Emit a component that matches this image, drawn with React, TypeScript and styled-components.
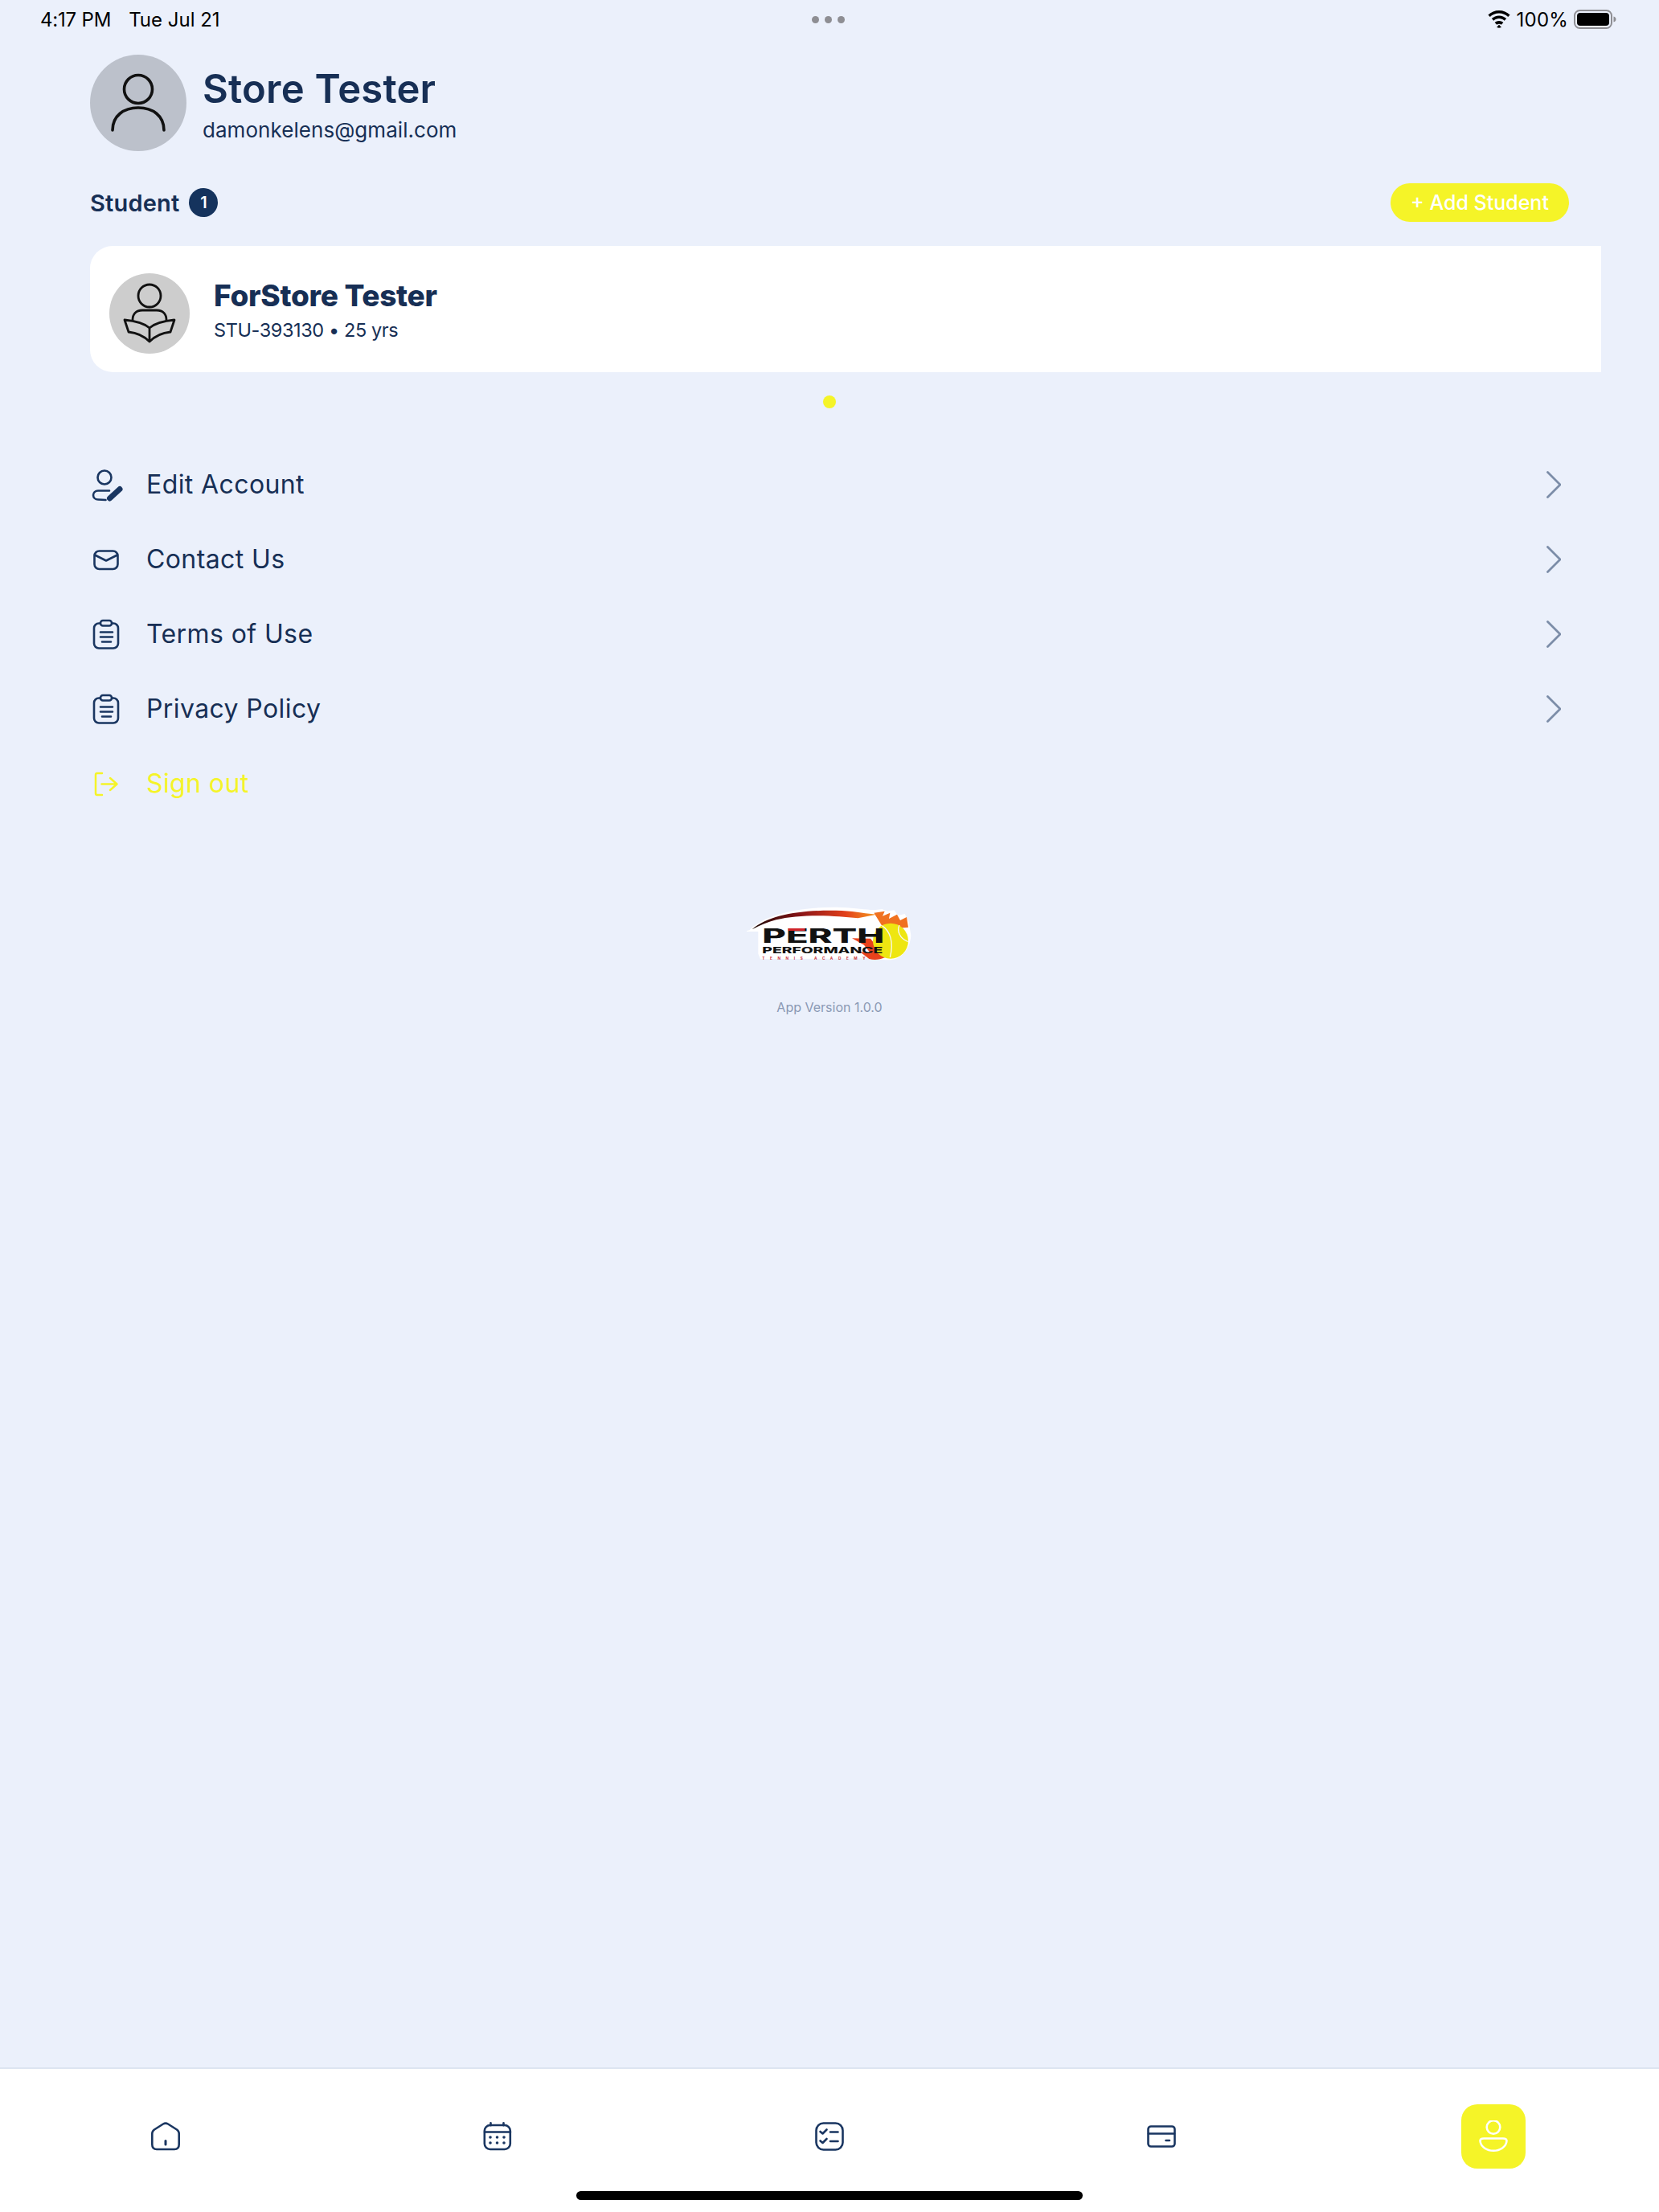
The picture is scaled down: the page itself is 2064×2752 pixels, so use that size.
import React from "react";
import styled, { createGlobalStyle } from "styled-components";

const NAVY = "#172f55";
const ICON = "#1a3661";
const YELLOW = "#f5f428";
const BG = "#ebf0fb";
const FONT = `"Inter", "Noto Sans", sans-serif`;

const Global = createGlobalStyle`
  html, body { margin: 0; padding: 0; background: ${BG}; }
  * { box-sizing: border-box; }
`;

const Page = styled.div`
  width: 2064px;
  height: 2752px;
  display: flex;
  flex-direction: column;
  background: ${BG};
  font-family: ${FONT};
  color: ${NAVY};
  overflow: hidden;
  position: relative;
`;

const StatusBar = styled.div`
  height: 48px;
  flex: none;
  display: grid;
  grid-template-columns: 1fr auto 1fr;
  align-items: center;
  padding: 0 53px 0 50px;
  color: #000;
  font-size: 24px;
`;
const StatusLeft = styled.div`
  display: flex;
  gap: 22px;
`;
const ClockTime = styled.span`
  letter-spacing: -0.2px;
`;
const Dots = styled.div`
  display: flex;
  gap: 7px;
`;
const Dot3 = styled.span`
  width: 9px;
  height: 9px;
  border-radius: 50%;
  background: #8e8e93;
`;
const StatusRight = styled.div`
  display: flex;
  align-items: center;
  justify-content: flex-end;
  gap: 7px;
  letter-spacing: 0.2px;
`;

const Main = styled.main`
  flex: 1;
  padding: 20px 112px 0;
  display: flex;
  flex-direction: column;
`;

const Profile = styled.section`
  display: flex;
  align-items: center;
  gap: 20px;
  height: 120px;
`;
const AvatarCircle = styled.div<{ $size: number; $bg: string }>`
  width: ${(p) => p.$size}px;
  height: ${(p) => p.$size}px;
  border-radius: 50%;
  background: ${(p) => p.$bg};
  flex: none;
  display: flex;
`;
const ProfileText = styled.div`
  display: flex;
  flex-direction: column;
  gap: 8px;
  padding-top: 5px;
`;
const Title = styled.h1`
  margin: 0;
  font-size: 49px;
  line-height: 54px;
  font-weight: 600;
  color: ${NAVY};
  letter-spacing: 0.2px;
`;
const Email = styled.div`
  font-size: 26px;
  line-height: 32px;
  font-weight: 400;
  letter-spacing: 0.05px;
`;

const SectionRow = styled.section`
  margin-top: 40px;
  height: 48px;
  display: flex;
  align-items: center;
  justify-content: space-between;
`;
const SectionTitle = styled.div`
  display: flex;
  align-items: center;
  gap: 12px;
  font-size: 29px;
  font-weight: 600;
  letter-spacing: 0.2px;
`;
const Badge = styled.span`
  width: 36px;
  height: 36px;
  border-radius: 50%;
  background: #15335d;
  color: #fff;
  font-size: 20px;
  font-weight: 600;
  display: flex;
  align-items: center;
  justify-content: center;
`;
const AddButton = styled.button`
  width: 222px;
  height: 48px;
  border: 0;
  border-radius: 24px;
  background: ${YELLOW};
  color: #fff;
  font-family: ${FONT};
  font-size: 25px;
  font-weight: 500;
  padding: 0;
`;

const Carousel = styled.div`
  margin: 30px -40px 0 0;
  overflow: hidden;
`;
const StudentCard = styled.article`
  width: calc(100% + 40px);
  height: 157px;
  border-radius: 28px;
  background: #fff;
  display: flex;
  align-items: center;
  gap: 30px;
  padding: 11px 0 0 24px;
`;
const StudentText = styled.div`
  display: flex;
  flex-direction: column;
  gap: 6px;
  margin-bottom: 8px;
`;
const StudentName = styled.div`
  font-size: 37px;
  line-height: 44px;
  font-weight: 800;
  letter-spacing: -0.3px;
`;
const StudentMeta = styled.div`
  font-size: 23.5px;
  line-height: 30px;
  letter-spacing: -0.4px;
`;
const PageDot = styled.div`
  width: 16px;
  height: 16px;
  border-radius: 50%;
  background: ${YELLOW};
  margin: 29px auto 48px;
`;

const Menu = styled.nav`
  display: flex;
  flex-direction: column;
`;
const Row = styled.div<{ $accent?: boolean }>`
  height: 93px;
  display: flex;
  align-items: center;
  gap: 27px;
  padding-right: 10px;
  font-size: 32px;
  font-weight: 400;
  color: ${(p) => (p.$accent ? YELLOW : NAVY)};
`;
const RowLabel = styled.span`
  flex: 1;
  margin-left: -1px;
  letter-spacing: 0.4px;
`;

const Footer = styled.div`
  margin-top: 106px;
  display: flex;
  flex-direction: column;
  align-items: center;
  gap: 42px;
`;
const Version = styled.div`
  font-size: 16px;
  line-height: 24px;
  color: #8a99b4;
`;

const TabBar = styled.footer`
  height: 180px;
  flex: none;
  background: #fff;
  border-top: 2px solid #dde4f0;
  display: grid;
  grid-template-columns: repeat(5, 1fr);
  padding-bottom: 10px;
`;
const Tab = styled.div`
  display: flex;
  align-items: center;
  justify-content: center;
`;
const ActiveTab = styled.div`
  width: 80px;
  height: 80px;
  border-radius: 20px;
  background: ${YELLOW};
  display: flex;
  align-items: center;
  justify-content: center;
`;
const HomeIndicator = styled.div`
  position: absolute;
  left: 717px;
  bottom: 15px;
  width: 630px;
  height: 11px;
  border-radius: 6px;
  background: #000;
`;

const LogoText = styled.text<{ $size: number; $weight: number }>`
  font-family: ${FONT};
  font-size: ${(p) => p.$size}px;
  font-weight: ${(p) => p.$weight};
`;

const Wifi = () => (
  <svg width="30" height="22" viewBox="0 0 30 22" fill="#000">
    <path d="M15 3.6c4.3 0 8.3 1.7 11.2 4.5l2.4-2.6C24.9 2 20.2 0 15 0S5.100 2 1.400 5.500l2.400 2.600C6.700 5.300 10.700 3.600 15 3.600z" />
    <path d="M15 10c2.500 0 4.900 1 6.700 2.700l2.500-2.600C21.800 7.800 18.500 6.400 15 6.400s-6.800 1.400-9.200 3.700l2.500 2.600C10.100 11 12.500 10 15 10z" />
    <path d="M15 16.200c1 0 2 .4 2.700 1l2.700-2.700c-1.400-1.300-3.300-2.100-5.400-2.100s-4 .8-5.400 2.100l2.700 2.700c.7-.6 1.700-1 2.700-1z" transform="translate(0 .6)" />
    <path d="M15 17.800l-3 3.200L15 21.800l3-.8z" />
  </svg>
);

const Battery = () => (
  <svg width="53" height="24" viewBox="0 0 53 24">
    <rect x="1" y="1" width="46" height="22" rx="6.500" fill="none" stroke="#8e8e93" strokeWidth="2" />
    <rect x="4" y="4" width="40" height="16" rx="4" fill="#000" />
    <path d="M49.500 8.500c1.800.5 3 1.800 3 3.500s-1.200 3-3 3.500z" fill="#8e8e93" />
  </svg>
);

const PersonLarge = () => (
  <svg width="120" height="120" viewBox="0 0 120 120" fill="none" stroke="#111" strokeWidth="3.600" strokeLinecap="round">
    <circle cx="60" cy="43" r="17.500" />
    <path d="M28 94C28 76 42 66 60 66s32 10 32 28" />
  </svg>
);

const StudentIcon = () => (
  <svg width="100" height="100" viewBox="0 0 100 100" fill="none" stroke="#111" strokeWidth="2.800" strokeLinejoin="round" strokeLinecap="round">
    <circle cx="50" cy="28" r="14" />
    <path d="M29 58c0-7 4-12 12-12h18c8 0 12 5 12 12" />
    <path d="M50 68C43 62 30 59 19 58l5 15c10 1 19 5 26 12 7-7 16-11 26-12l5-15c-11 1-24 4-31 10zM50 68v17" />
  </svg>
);

const EditIcon = () => (
  <svg width="44" height="44" viewBox="0 0 44 44" fill="none" stroke={ICON} strokeWidth="2.600" strokeLinecap="round">
    <circle cx="18" cy="13" r="8.500" />
    <path d="M24 29.500H10C6.500 29.500 4 32 4 35s2.500 5.500 6 5.500l9.500.5" />
    <path d="M24.500 39l12.500-11.500" strokeWidth="7" />
  </svg>
);
const MailIcon = () => (
  <svg width="44" height="44" viewBox="0 0 44 44" fill="none" stroke={ICON} strokeWidth="2.600" strokeLinecap="round" strokeLinejoin="round">
    <rect x="5.500" y="11.500" width="29" height="22.500" rx="6" />
    <path d="M6 16.500l14 7 14-7" />
  </svg>
);
const ClipIcon = () => (
  <svg width="44" height="44" viewBox="0 0 44 44" fill="none" stroke={ICON} strokeWidth="2.600" strokeLinecap="round">
    <rect x="5" y="8.500" width="30" height="31" rx="6" />
    <rect x="13" y="5" width="14" height="6.500" rx="3" fill={BG} />
    <path d="M13 19.500h15M13 25.500h15M15 31.500h11" />
  </svg>
);
const SignOutIcon = () => (
  <svg width="44" height="44" viewBox="0 0 44 44" fill="none" stroke={YELLOW} strokeWidth="2.500" strokeLinecap="round" strokeLinejoin="round">
    <path d="M15 9H9a2 2 0 0 0-2 2v23a2 2 0 0 0 2 2h6" />
    <path d="M14.500 22.500h19M25 15l8.500 7.500L25 30" />
  </svg>
);
const Chevron = () => (
  <svg width="18" height="34" viewBox="0 0 18 34" fill="none" stroke="#7c8da8" strokeWidth="2.800" strokeLinecap="round" strokeLinejoin="round">
    <path d="M1.500 1.500L17 17 1.500 32.500" />
  </svg>
);

const HomeIcon = () => (
  <svg width="36" height="36" viewBox="0 0 36 36" fill="none" stroke={ICON} strokeWidth="2.600" strokeLinecap="round" strokeLinejoin="round">
    <path d="M15 2.500L4 9.500Q1.300 11.500 1.300 14.500V28Q1.300 34 7 34H29Q34.700 34 34.700 28V14.500Q34.700 11.500 32 9.500L21 2.500Q18 .7 15 2.500Z" />
    <path d="M18 23.500v4.500" strokeWidth="3" />
  </svg>
);
const CalendarIcon = () => (
  <svg width="36" height="36" viewBox="0 0 36 36" fill="none" stroke={ICON} strokeWidth="2.600" strokeLinecap="round">
    <rect x="1.800" y="4" width="32" height="30" rx="7" />
    <path d="M2 12.500h32M9.500 1.300v3M25.500 1.300v3" />
    <g fill={ICON} stroke="none">
      <circle cx="9" cy="19" r="1.800" />
      <circle cx="17.500" cy="19" r="1.800" />
      <circle cx="26" cy="19" r="1.800" />
      <circle cx="9" cy="26" r="1.800" />
      <circle cx="17.500" cy="26" r="1.800" />
      <circle cx="26" cy="26" r="1.800" />
    </g>
  </svg>
);
const ChecklistIcon = () => (
  <svg width="36" height="36" viewBox="0 0 36 36" fill="none" stroke={ICON} strokeWidth="2.600" strokeLinecap="round" strokeLinejoin="round">
    <rect x="1.500" y="1.500" width="33" height="33" rx="9" />
    <path d="M6.500 12l3 2.500 5-5M6.500 23.500l3 2.500 5-5M19 12.500h9.500M19 24h9.500" />
  </svg>
);
const CardIcon = () => (
  <svg width="36" height="28" viewBox="0 0 36 28" fill="none" stroke={ICON} strokeWidth="2.600" strokeLinecap="round">
    <rect x="1.500" y="1.500" width="33" height="25" rx="3.500" />
    <path d="M2 10.500h32M23.500 19h4.500" />
  </svg>
);
const ProfileIcon = () => (
  <svg width="36" height="40" viewBox="0 0 36 40" fill="none" stroke="#fff" strokeWidth="2.600" strokeLinejoin="round">
    <circle cx="18" cy="8.500" r="8.300" />
    <path d="M6 22.500H30Q34.500 22.500 34.500 25.500C34 33 26 37.800 18 37.800S2 33 1.500 25.500Q1.500 22.500 6 22.500Z" />
  </svg>
);

const Logo = () => (
  <svg width="206" height="72" viewBox="85 74 618 216">
    <defs>
      <linearGradient id="swoosh" x1="0" x2="1" y1="0" y2="0">
        <stop offset="0" stopColor="#1a0806" />
        <stop offset="0.4" stopColor="#8c1517" />
        <stop offset="0.75" stopColor="#e2401b" />
        <stop offset="1" stopColor="#f59a1f" />
      </linearGradient>
    </defs>
    <path
      d="M95 165C150 105 290 75 440 80c50 2 90 8 120 10l30-4 20 8 25-4 15 20 25-6 15 30 8 50c-3 55-40 92-82 92-35 0-60-8-90-6l-390 3-8-20V170l-60 0z"
      fill="#ffffff"
    />
    <path d="M105 162C170 105 300 87 440 92c55 3 95 12 130 14l-70 14-70-6c-60-6-170-6-235 12-30 8-60 20-90 36z" fill="url(#swoosh)" />
    <path d="M478 195l45 25 25 32-42-8 36 28c20 6 40 3 60-6l-55-70z" fill="#e8421c" />
    <path d="M560 100l40-6-8 18 28-12-4 22 30-16 12 22 24-12 6 38-90 8z" fill="#f0711f" />
    <circle cx="622" cy="205" r="66" fill="#eee611" />
    <path d="M590 148c30 20 45 60 30 118M655 146c-10 20 0 50 32 62" fill="none" stroke="#f8f8f0" strokeWidth="4" />
    <LogoText x="143" y="212" $size={72} $weight={800} fill="#111" textLength="456" lengthAdjust="spacingAndGlyphs">PERTH</LogoText>
    <rect x="240" y="158" width="62" height="9" fill="#d0242a" />
    <LogoText x="143" y="250" $size={30} $weight={800} fill="#111" textLength="450" lengthAdjust="spacingAndGlyphs">PERFORMANCE</LogoText>
    <LogoText x="143" y="276" $size={14} $weight={700} fill="#c9323a" textLength="385" lengthAdjust="spacing">TENNIS ACADEMY</LogoText>
  </svg>
);

const menu = [
  { label: "Edit Account", icon: <EditIcon /> },
  { label: "Contact Us", icon: <MailIcon /> },
  { label: "Terms of Use", icon: <ClipIcon /> },
  { label: "Privacy Policy", icon: <ClipIcon /> },
];

export default function App() {
  return (
    <Page>
      <Global />
      <StatusBar>
        <StatusLeft>
          <ClockTime>4:17 PM</ClockTime>
          <span>Tue Jul 21</span>
        </StatusLeft>
        <Dots>
          <Dot3 />
          <Dot3 />
          <Dot3 />
        </Dots>
        <StatusRight>
          <Wifi />
          <span>100%</span>
          <Battery />
        </StatusRight>
      </StatusBar>
      <Main>
        <Profile>
          <AvatarCircle $size={120} $bg="#bcc1cb">
            <PersonLarge />
          </AvatarCircle>
          <ProfileText>
            <Title>Store Tester</Title>
            <Email>damonkelens@gmail.com</Email>
          </ProfileText>
        </Profile>
        <SectionRow>
          <SectionTitle>
            Student
            <Badge>1</Badge>
          </SectionTitle>
          <AddButton>+ Add Student</AddButton>
        </SectionRow>
        <Carousel>
          <StudentCard>
            <AvatarCircle $size={100} $bg="#cdcdcd">
              <StudentIcon />
            </AvatarCircle>
            <StudentText>
              <StudentName>ForStore Tester</StudentName>
              <StudentMeta>STU-393130 • 25 yrs</StudentMeta>
            </StudentText>
          </StudentCard>
        </Carousel>
        <PageDot />
        <Menu>
          {menu.map((m) => (
            <Row key={m.label}>
              {m.icon}
              <RowLabel>{m.label}</RowLabel>
              <Chevron />
            </Row>
          ))}
          <Row $accent>
            <SignOutIcon />
            <RowLabel>Sign out</RowLabel>
          </Row>
        </Menu>
        <Footer>
          <Logo />
          <Version>App Version 1.0.0</Version>
        </Footer>
      </Main>
      <TabBar>
        <Tab><HomeIcon /></Tab>
        <Tab><CalendarIcon /></Tab>
        <Tab><ChecklistIcon /></Tab>
        <Tab><CardIcon /></Tab>
        <Tab>
          <ActiveTab>
            <ProfileIcon />
          </ActiveTab>
        </Tab>
      </TabBar>
      <HomeIndicator />
    </Page>
  );
}
